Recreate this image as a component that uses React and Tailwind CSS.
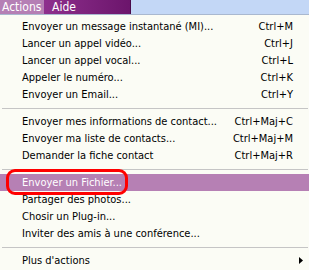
import React from 'react';

const groups = [
    [
        { label: 'Envoyer un message instantané (MI)...', shortcut: 'Ctrl+M' },
        { label: 'Lancer un appel vidéo...', shortcut: 'Ctrl+J' },
        { label: 'Lancer un appel vocal...', shortcut: 'Ctrl+L' },
        { label: 'Appeler le numéro...', shortcut: 'Ctrl+K' },
        { label: 'Envoyer un Email...', shortcut: 'Ctrl+Y' },
    ],
    [
        { label: 'Envoyer mes informations de contact...', shortcut: 'Ctrl+Maj+C' },
        { label: 'Envoyer ma liste de contacts...', shortcut: 'Ctrl+Maj+M' },
        { label: 'Demander la fiche contact', shortcut: 'Ctrl+Maj+R' },
    ],
    [
        { label: 'Envoyer un Fichier...', active: true },
        { label: 'Partager des photos...' },
        { label: 'Chosir un Plug-in...' },
        { label: 'Inviter des amis à une conférence...' },
    ],
    [{ label: "Plus d'actions", submenu: true }],
];

const MenuItem = ({ item }) => (
    <div
        className={`relative h-[17px] flex items-center justify-between pl-[22px] pr-[16px] ${
            item.active ? 'bg-[#b680b4] text-white' : 'text-black'
        }`}
    >
        <span>{item.label}</span>
        {item.shortcut && <span>{item.shortcut}</span>}
        {item.submenu && (
            <svg width="4" height="7" viewBox="0 0 4 7" className="mr-[-10px]">
                <polygon points="0,0 4,3.5 0,7" fill="#000" />
            </svg>
        )}
        {/* red annotation ring */}
        {item.active && (
            <span className="absolute left-[6px] top-[-5px] w-[122px] h-[26px] border-[3px] border-[#ff0000] rounded-[9px]" />
        )}
    </div>
);

const Separator = () => (
    <div className="h-[10px] flex items-center pl-[2px] pr-[1px]">
        <div className="h-px w-full bg-[#c5c5c5]" />
    </div>
);

export default function App() {
    return (
        <div
            className="w-[309px] h-[270px] overflow-hidden bg-[#fbfcf5] text-[11px] leading-none"
            style={{ fontFamily: '"DejaVu Sans Condensed", "DejaVu Sans", sans-serif' }}
        >
            {/* Menu bar */}
            <div className="flex h-[15px] border-b border-[#a9b8cf]">
                <div className="w-[44px] bg-[#b57fb5] text-white flex items-center pl-[2px] text-[12px]">Actions</div>
                <div className="w-[87px] bg-gradient-to-r from-[#8e2f8d] to-[#6c156c] text-white flex items-center pl-[8px] text-[12px] border-r border-[#4a0a4a]">
                    Aide
                </div>
                <div className="flex-1 bg-[#c3d7f6]" />
            </div>

            {/* Menu */}
            <div className="pt-[3px]">
                {groups.map((group, gi) => (
                    <React.Fragment key={gi}>
                        {gi > 0 && <Separator />}
                        {group.map((item) => (
                            <MenuItem key={item.label} item={item} />
                        ))}
                    </React.Fragment>
                ))}
            </div>
        </div>
    );
}
